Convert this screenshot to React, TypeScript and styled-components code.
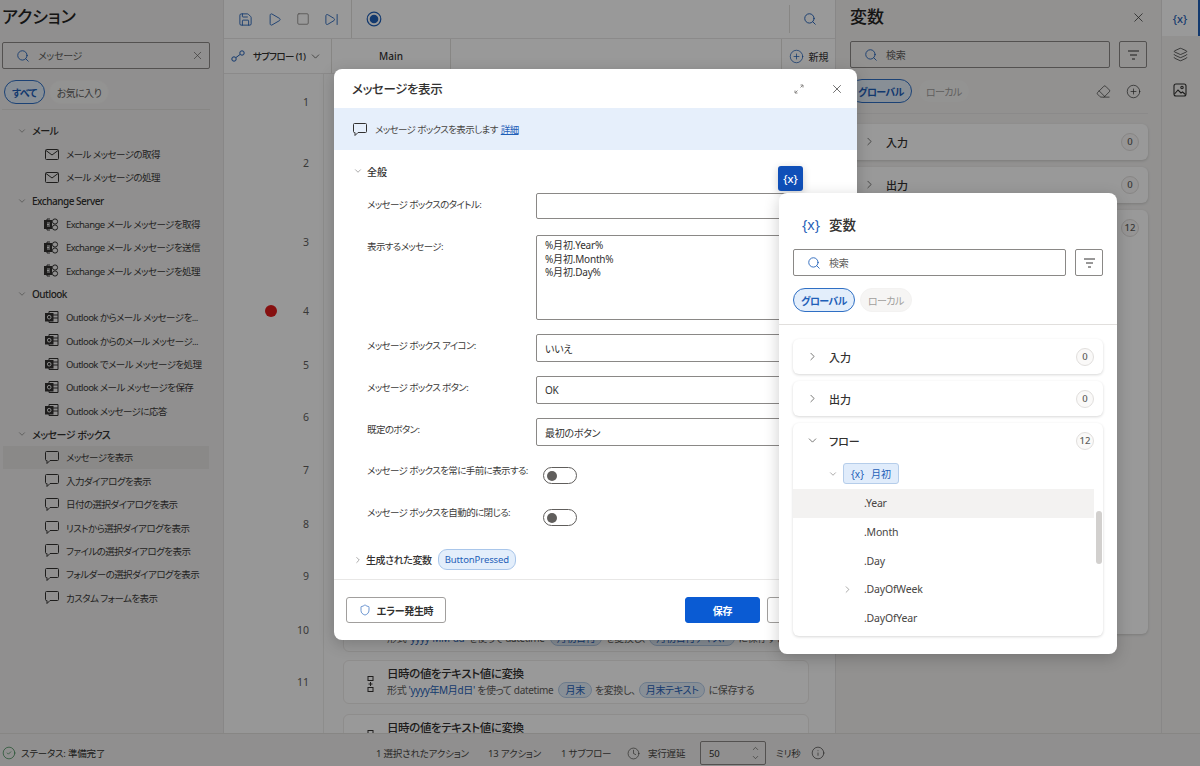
import React from "react";
import styled, { createGlobalStyle } from "styled-components";
import {
  ChevronDown,
  ChevronRight,
  CircleCheck,
  CirclePlus,
  Clock,
  Eraser,
  Info,
  Layers,
  Play,
  Save,
  Search,
  Shield,
  SkipForward,
  Square,
  X,
} from "lucide-react";

const BLUE = "#1f5fb8";

const GlobalStyle = createGlobalStyle`
  * { box-sizing: border-box; }
  html, body { margin: 0; padding: 0; height: 100%; overflow: hidden; }
  body {
    font-family: "Noto Sans", "Noto Sans CJK JP", sans-serif;
    font-feature-settings: "palt";
    font-size: 10px;
    color: #323130;
    background: #fff;
  }
`;

const MailIcon = () => (
  <svg width="14" height="11" viewBox="0 0 14 11" fill="none" stroke="#323130" strokeWidth="1">
    <rect x="0.5" y="0.5" width="13" height="10" rx="1" />
    <path d="M1 1.500 7 6l6-4.500" />
  </svg>
);

const BubbleIcon = () => (
  <svg width="14" height="13" viewBox="0 0 14 13" fill="none" stroke="#323130" strokeWidth="1">
    <path d="M1.500.5h11a1 1 0 0 1 1 1v7a1 1 0 0 1-1 1H5l-3 3v-3H1.500a1 1 0 0 1-1-1v-7a1 1 0 0 1 1-1z" />
  </svg>
);

const ExchangeIcon = () => (
  <svg width="15" height="13" viewBox="0 0 15 13" fill="none" stroke="#323130" strokeWidth="1">
    <rect x="0.5" y="2.500" width="7" height="8" fill="#323130" />
    <path d="M3 2.500V1h3M3 10.500V12h3" />
    <circle cx="11" cy="3.500" r="2.600" />
    <circle cx="11" cy="9.500" r="2.600" />
    <path d="M3 5h3M3 6.500h2.500M3 8h3" stroke="#eee" />
  </svg>
);

const OutlookIcon = () => (
  <svg width="14" height="13" viewBox="0 0 14 13" fill="none" stroke="#323130" strokeWidth="1">
    <path d="M4 2.500V.5h9v11H4V10" />
    <path d="M8 4h5M8 7h5" />
    <rect x="0.5" y="2.500" width="7.500" height="7.500" fill="#323130" />
    <circle cx="4.200" cy="6.200" r="1.800" stroke="#eee" />
  </svg>
);

const FilterIcon = () => (
  <svg width="13" height="10" viewBox="0 0 13 10" fill="none" stroke="#323130" strokeWidth="1">
    <path d="M1 1h11M3 5h7M5 9h3" />
  </svg>
);

const RecordIcon = () => (
  <svg width="16" height="16" viewBox="0 0 16 16">
    <circle cx="8" cy="8" r="6.800" fill="none" stroke={BLUE} strokeWidth="1.200" />
    <circle cx="8" cy="8" r="4.300" fill={BLUE} />
  </svg>
);

const SubflowIcon = () => (
  <svg width="14" height="12" viewBox="0 0 14 12" fill="none" stroke={BLUE} strokeWidth="1">
    <circle cx="3" cy="9" r="2.200" />
    <circle cx="11" cy="3" r="2.200" />
    <path d="M5 7.500 9 4.500" />
  </svg>
);

const ExpandIcon = () => (
  <svg width="10" height="10" viewBox="0 0 10 10" fill="none" stroke="#8a8886" strokeWidth="1">
    <path d="M1 9 3.500 6.500M6.500 3.500 9 1M6.500 1H9v2.500M1 6.500V9h2.500" />
  </svg>
);

const ImageRailIcon = () => (
  <svg width="14" height="14" viewBox="0 0 14 14" fill="none" stroke="#323130" strokeWidth="1.100">
    <rect x="1" y="1" width="12" height="12" rx="2" />
    <circle cx="9" cy="4.500" r="1.200" />
    <path d="M1.500 11 5 7l3 3 1.500-1 3 2.500" />
  </svg>
);

const ConvertIcon = () => (
  <svg width="7" height="16" viewBox="0 0 7 16" fill="none" stroke="#323130" strokeWidth="1">
    <rect x="1" y="0.500" width="5" height="4" />
    <rect x="1" y="11.500" width="5" height="4" />
    <path d="M1.500 8h4M3.500 6v4" />
  </svg>
);

const Page = styled.div`
  width: 1200px;
  height: 766px;
  position: relative;
  overflow: hidden;
  display: flex;
  flex-direction: column;
`;

const Workspace = styled.div`
  flex: 1;
  min-height: 0;
  display: flex;
`;

const ActionsPanel = styled.aside`
  width: 224px;
  flex-shrink: 0;
  background: #f0efee;
  padding: 5px 0 0 2px;
  border-right: 1px solid #e3e2e1;
`;

const PanelTitle = styled.h2`
  margin: 0;
  font-size: 17px;
  line-height: 24px;
  font-weight: 500;
  color: #242322;
`;

const LeftSearch = styled.div`
  margin-top: 13px;
`;

const SearchBox = styled.div<{ $width: number; $white?: boolean }>`
  width: ${(p) => p.$width}px;
  height: 27px;
  border: 1px solid #8a8886;
  border-radius: 2px;
  background: ${(p) => (p.$white ? "#fff" : "transparent")};
  display: flex;
  align-items: center;
  padding: 0 5px 0 13px;
  gap: 8px;
  font-size: 10px;
  letter-spacing: -0.3px;
  color: #605e5c;
  flex-shrink: 0;
`;

const SearchText = styled.span`
  flex: 1;
`;

const ChipRow = styled.div<{ $gap?: number }>`
  display: flex;
  align-items: center;
  gap: ${(p) => p.$gap ?? 4}px;
`;

const Pill = styled.span<{ $active?: boolean; $faint?: boolean }>`
  height: 24px;
  padding: 0 7px;
  border-radius: 12px;
  display: inline-flex;
  align-items: center;
  font-size: 10px;
  letter-spacing: -0.6px;
  font-weight: ${(p) => (p.$active ? 600 : 400)};
  border: 1px solid ${(p) => (p.$active ? "#2f6fc4" : "#f3f2f1")};
  background: ${(p) => (p.$active ? "#e3eefb" : "#f6f5f4")};
  color: ${(p) => (p.$active ? BLUE : p.$faint ? "#a19f9d" : "#605e5c")};
`;

const LeftChips = styled(ChipRow)`
  padding: 11px 0 5px 2px;
  border-bottom: 1px solid #e1dfdd;
  width: 208px;
`;

const Tree = styled.div`
  padding-top: 9px;
`;

const TreeHeader = styled.div`
  height: 23.350px;
  display: flex;
  align-items: center;
  gap: 5px;
  padding-left: 15px;
  font-weight: 500;
  font-size: 10px;
  letter-spacing: -0.5px;
`;

const TreeItem = styled.div<{ $active?: boolean }>`
  height: 23.350px;
  width: 206px;
  margin-left: 1px;
  display: flex;
  align-items: center;
  padding-left: 41px;
  gap: 7px;
  font-size: 9.500px;
  letter-spacing: -0.55px;
  white-space: nowrap;
  color: #3b3a39;
  background: ${(p) => (p.$active ? "#e6e5e3" : "transparent")};
`;

const ItemIcon = styled.span`
  width: 15px;
  display: inline-flex;
  justify-content: center;
`;

const FlowPanel = styled.main`
  width: 611px;
  flex-shrink: 0;
  background: #fcfcfc;
  display: flex;
  flex-direction: column;
  overflow: hidden;
`;

const Toolbar = styled.div`
  height: 39px;
  flex-shrink: 0;
  background: #fff;
  border-bottom: 1px solid #e8e7e6;
  display: flex;
  align-items: center;
  padding-left: 14px;
  gap: 14px;
  color: ${BLUE};
`;

const ToolDivider = styled.span`
  width: 1px;
  height: 38px;
  background: #e1dfdd;
  margin-left: -2px;
`;

const ToolSearch = styled.div`
  margin-left: auto;
  margin-right: 6px;
  width: 40px;
  height: 28px;
  border-left: 1px solid #e1dfdd;
  display: flex;
  align-items: center;
  justify-content: center;
`;

const TabBar = styled.div`
  height: 35px;
  flex-shrink: 0;
  background: #fff;
  border-bottom: 1px solid #e8e7e6;
  display: flex;
  align-items: stretch;
`;

const SubflowTab = styled.div`
  width: 108px;
  border-right: 1px solid #e1dfdd;
  display: flex;
  align-items: center;
  padding-left: 7px;
  font-size: 9.500px;
  letter-spacing: -0.6px;
  font-weight: 500;
  white-space: nowrap;
`;

const SubflowLabel = styled.span`
  margin: 0 4px 0 8px;
`;

const MainTab = styled.div`
  width: 119px;
  border-right: 1px solid #e1dfdd;
  display: flex;
  align-items: center;
  justify-content: center;
  font-weight: 500;
`;

const NewButton = styled.div`
  margin-left: auto;
  width: 54px;
  border-left: 1px solid #e1dfdd;
  display: flex;
  align-items: center;
  justify-content: center;
  gap: 5px;
  color: ${BLUE};
`;

const NewLabel = styled.span`
  color: #323130;
`;

const Rows = styled.div`
  flex: 1;
  min-height: 0;
  overflow: hidden;
`;

const Row = styled.div<{ $height: number }>`
  height: ${(p) => p.$height}px;
  display: flex;
  align-items: center;
`;

const Gutter = styled.div`
  width: 100px;
  height: 100%;
  flex-shrink: 0;
  position: relative;
  border-right: 1px solid #ecebea;
  display: flex;
  align-items: center;
  justify-content: flex-end;
  padding-right: 14px;
  font-size: 10.500px;
  color: #605e5c;
`;

const Breakpoint = styled.span`
  position: absolute;
  left: 41px;
  top: 50%;
  width: 12px;
  height: 12px;
  margin-top: -6px;
  border-radius: 50%;
  background: #e01b1b;
`;

const FlowCard = styled.div`
  flex: 1;
  height: 44px;
  flex-shrink: 0;
  margin: 0 26px 0 19px;
  background: #fff;
  border: 1px solid #edebe9;
  border-radius: 6px;
  display: flex;
  align-items: flex-start;
  padding: 5px 0 0 23px;
  gap: 13px;
  overflow: hidden;
`;

const CardIcon = styled.span`
  margin-top: 10px;
  display: inline-flex;
`;

const CardTitle = styled.div`
  font-size: 11.500px;
  letter-spacing: -0.4px;
  line-height: 16px;
  font-weight: 500;
`;

const CardText = styled.div`
  font-size: 10px;
  letter-spacing: -0.35px;
  line-height: 15px;
  color: #605e5c;
  white-space: nowrap;
`;

const Format = styled.span`
  color: ${BLUE};
`;

const VarChip = styled.span`
  display: inline-block;
  padding: 0 6px;
  margin: 0 3px;
  line-height: 14px;
  border-radius: 8px;
  background: #e3eefb;
  border: 1px solid #b5cdea;
  color: ${BLUE};
`;

const VariablesPanel = styled.aside`
  width: 326px;
  flex-shrink: 0;
  background: #f3f2f1;
  border-left: 1px solid #e3e2e1;
  padding: 5px 13px 0 14px;
`;

const PanelHead = styled.div`
  height: 24px;
  display: flex;
  align-items: center;
  justify-content: space-between;
  padding-right: 2px;
  margin-bottom: 12px;
`;

const SearchRow = styled.div`
  display: flex;
  align-items: center;
  gap: 9px;
`;

const FilterButton = styled.span<{ $white?: boolean }>`
  width: 28px;
  height: 27px;
  border: 1px solid #8a8886;
  border-radius: 2px;
  display: inline-flex;
  align-items: center;
  justify-content: center;
  background: ${(p) => (p.$white ? "#fff" : "transparent")};
`;

const ScopeRow = styled.div`
  display: flex;
  align-items: center;
  gap: 6px;
  padding: 11px 0 10px 0;
  margin-bottom: 10px;
  border-bottom: 1px solid #e8e7e6;
`;

const ScopeActions = styled.div`
  margin-left: auto;
  display: flex;
  align-items: center;
  gap: 15px;
  padding-right: 7px;
`;

const GroupCard = styled.div<{ $height: number }>`
  height: ${(p) => p.$height}px;
  background: #fff;
  border-radius: 6px;
  box-shadow: 0 1px 3px rgba(0, 0, 0, 0.16);
  margin-bottom: 7px;
`;

const GroupHead = styled.div`
  height: 35px;
  display: flex;
  align-items: center;
  gap: 10px;
  padding: 0 9px 0 13px;
  font-size: 11px;
  font-weight: 500;
`;

const GroupLabel = styled.span`
  flex: 1;
`;

const Count = styled.span`
  width: 18px;
  height: 18px;
  border-radius: 50%;
  border: 1px solid #e1dfdd;
  background: #faf9f8;
  display: inline-flex;
  align-items: center;
  justify-content: center;
  font-size: 9.500px;
  color: #605e5c;
`;

const Rail = styled.nav`
  flex: 1;
  background: #f3f2f1;
  border-left: 1px solid #e3e2e1;
  display: flex;
  flex-direction: column;
  align-items: stretch;
`;

const RailButton = styled.div<{ $active?: boolean }>`
  height: 36px;
  display: flex;
  align-items: center;
  justify-content: center;
  background: ${(p) => (p.$active ? "#fff" : "transparent")};
  border-right: 2px solid ${(p) => (p.$active ? BLUE : "transparent")};
  color: ${BLUE};
  font-size: 11px;
  font-weight: 500;
`;

const StatusBar = styled.footer`
  height: 33px;
  flex-shrink: 0;
  background: #f0efee;
  border-top: 1px solid #e1dfdd;
  display: flex;
  align-items: center;
  padding: 6px 0 0 2px;
  font-size: 9.500px;
  letter-spacing: -0.2px;
`;

const StatusLeft = styled.div`
  width: 374px;
  display: flex;
  align-items: center;
  gap: 5px;
  color: #323130;
`;

const StatusItem = styled.span<{ $width: number }>`
  width: ${(p) => p.$width}px;
  color: #484644;
  white-space: nowrap;
`;

const DelayLabel = styled(StatusItem)`
  margin-left: 8px;
`;

const DelayBox = styled.span`
  width: 66px;
  height: 24px;
  margin: 0 10px 0 8px;
  border: 1px solid #8a8886;
  border-radius: 2px;
  display: inline-flex;
  align-items: center;
  justify-content: space-between;
  padding: 0 5px 0 8px;
`;

const Stepper = styled.span`
  display: inline-flex;
  flex-direction: column;
  line-height: 0;
`;

const StepUp = styled(ChevronDown)`
  transform: rotate(180deg);
`;

const Dim = styled.div`
  position: absolute;
  inset: 0;
  background: rgba(0, 0, 0, 0.4);
`;

const Modal = styled.section`
  position: absolute;
  left: 334px;
  top: 69px;
  width: 523px;
  height: 571px;
  background: #fff;
  border-radius: 8px;
  overflow: hidden;
  box-shadow: 0 4px 16px rgba(0, 0, 0, 0.2);
  display: flex;
  flex-direction: column;
`;

const ModalHead = styled.div`
  height: 39px;
  flex-shrink: 0;
  display: flex;
  align-items: center;
  padding: 0 13px 0 18px;
  font-size: 12.500px;
  letter-spacing: -0.4px;
  font-weight: 500;
`;

const ModalTitle = styled.span`
  flex: 1;
`;

const ExpandWrap = styled.span`
  display: inline-flex;
  margin-right: 26px;
`;

const InfoBand = styled.div`
  height: 42px;
  flex-shrink: 0;
  background: #e6effb;
  display: flex;
  align-items: center;
  gap: 8px;
  padding-left: 19px;
  font-size: 9.500px;
  letter-spacing: -0.6px;
  color: #484644;
`;

const DocLink = styled.a`
  color: ${BLUE};
  text-decoration: underline;
  margin-left: 3px;
`;

const SectionHead = styled.div`
  display: flex;
  align-items: center;
  gap: 4px;
  padding-left: 19px;
  height: 42px;
  margin-bottom: 1px;
  font-weight: 500;
`;

const FormGrid = styled.div`
  display: grid;
  grid-template-columns: 169px 320px;
  padding-left: 33px;
  row-gap: 14px;
  margin-bottom: 18px;
`;

const FieldLabel = styled.label`
  font-size: 9.500px;
  letter-spacing: -0.6px;
  line-height: 14px;
  padding-top: 5px;
  white-space: nowrap;
  color: #3b3a39;
`;

const FieldBox = styled.div<{ $height: number }>`
  height: ${(p) => p.$height}px;
  border: 1px solid #8a8886;
  border-radius: 2px;
  padding: 0 8px;
  font-size: 10px;
  letter-spacing: -0.3px;
  display: flex;
  align-items: center;
`;

const TitleBox = styled(FieldBox)`
  margin-bottom: 2px;
`;

const MessageBox = styled.div`
  height: 85px;
  border: 1px solid #8a8886;
  border-radius: 2px;
  padding: 3px 8px;
  font-size: 10px;
  letter-spacing: -0.2px;
  line-height: 13.500px;
`;

const ToggleRow = styled.div`
  display: grid;
  grid-template-columns: 176px auto;
  justify-content: start;
  align-items: start;
  padding-left: 33px;
  height: 42px;
`;

const ToggleLabel = styled.span`
  font-size: 9.500px;
  letter-spacing: -0.6px;
  line-height: 14px;
  color: #3b3a39;
  white-space: nowrap;
`;

const Toggle = styled.span`
  margin-top: 3px;
  width: 34px;
  height: 17px;
  border: 1px solid #605e5c;
  border-radius: 9px;
  display: inline-flex;
  align-items: center;
  padding-left: 3px;
`;

const Knob = styled.span`
  width: 10px;
  height: 10px;
  border-radius: 50%;
  background: #605e5c;
`;

const GeneratedRow = styled.div`
  display: flex;
  align-items: center;
  gap: 3px;
  padding-left: 19px;
  height: 21px;
  margin-top: 1px;
  font-weight: 500;
  font-size: 10px;
  letter-spacing: -0.4px;
`;

const OutputChip = styled.span`
  height: 21px;
  margin-left: 3px;
  padding: 0 6px;
  border-radius: 9px;
  display: inline-flex;
  align-items: center;
  background: #e3eefb;
  border: 1px solid #a9c6ea;
  color: ${BLUE};
  font-size: 9.500px;
  letter-spacing: -0.1px;
  font-weight: 400;
`;

const ModalFoot = styled.div`
  margin-top: 9px;
  height: 61px;
  border-top: 1px solid #e8e7e6;
  display: flex;
  align-items: center;
  padding: 0 7px 0 12px;
  gap: 7px;
`;

const FootButton = styled.button<{ $width: number; $primary?: boolean }>`
  width: ${(p) => p.$width}px;
  height: 26px;
  flex-shrink: 0;
  border-radius: 3px;
  border: 1px solid ${(p) => (p.$primary ? "#0a5bd3" : "#a19f9d")};
  background: ${(p) => (p.$primary ? "#0a5bd3" : "#fff")};
  color: ${(p) => (p.$primary ? "#fff" : "#323130")};
  font: inherit;
  font-weight: 600;
  letter-spacing: -0.3px;
  display: inline-flex;
  align-items: center;
  justify-content: center;
  gap: 6px;
  padding: 0;
`;

const FootGap = styled.span`
  flex: 1;
`;

const VarTrigger = styled.span`
  position: absolute;
  left: 778px;
  top: 166px;
  width: 25px;
  height: 25px;
  border-radius: 3px;
  background: #0f4fb8;
  color: #fff;
  font-size: 11px;
  font-weight: 500;
  display: flex;
  align-items: center;
  justify-content: center;
  box-shadow: 0 2px 8px rgba(0, 0, 0, 0.2);
`;

const Popup = styled.section`
  position: absolute;
  left: 779px;
  top: 193px;
  width: 338px;
  height: 461px;
  background: #fff;
  border-radius: 8px;
  box-shadow: 0 4px 16px rgba(0, 0, 0, 0.2);
  padding-top: 19px;
`;

const PopupHead = styled.div`
  height: 24px;
  display: flex;
  align-items: center;
  gap: 9px;
  padding-left: 23px;
  font-size: 13.500px;
  font-weight: 500;
  margin-bottom: 13px;
`;

const VarGlyph = styled.span`
  color: ${BLUE};
  font-size: 14px;
  font-weight: 400;
`;

const PopupSearch = styled(SearchRow)`
  padding-left: 14px;
`;

const PopupScopes = styled(ChipRow)`
  padding: 12px 0 12px 14px;
  border-bottom: 1px solid #e1dfdd;
  margin-bottom: 14px;
  gap: 5px;
`;

const PopupGroups = styled.div`
  padding: 0 14px;
`;

const VarRow = styled.div`
  display: flex;
  align-items: center;
  height: 31px;
  padding-left: 35px;
  gap: 5px;
`;

const VarChipBox = styled.span`
  height: 21px;
  width: 56px;
  border-radius: 3px;
  background: #e0ecfb;
  border: 1px solid #b5cdea;
  color: ${BLUE};
  display: inline-flex;
  align-items: center;
  justify-content: center;
  gap: 7px;
`;

const TreeScroll = styled.div`
  position: relative;
`;

const FieldRow = styled.div<{ $active?: boolean }>`
  height: 28.700px;
  width: 301px;
  display: flex;
  align-items: center;
  padding-left: 71px;
  position: relative;
  font-size: 10.500px;
  letter-spacing: -0.2px;
  color: #484644;
  background: ${(p) => (p.$active ? "#f3f2f1" : "transparent")};
`;

const FieldChevron = styled.span`
  position: absolute;
  left: 49px;
  display: inline-flex;
`;

const ScrollThumb = styled.span`
  position: absolute;
  right: 1px;
  top: 53px;
  width: 6px;
  height: 53px;
  border-radius: 3px;
  background: #d2d0ce;
`;

const TREE: { head: string; icon: React.ReactNode; items: string[] }[] = [
  { head: "メール", icon: <MailIcon />, items: ["メール メッセージの取得", "メール メッセージの処理"] },
  {
    head: "Exchange Server",
    icon: <ExchangeIcon />,
    items: ["Exchange メール メッセージを取得", "Exchange メール メッセージを送信", "Exchange メール メッセージを処理"],
  },
  {
    head: "Outlook",
    icon: <OutlookIcon />,
    items: [
      "Outlook からメール メッセージを...",
      "Outlook からのメール メッセージ...",
      "Outlook でメール メッセージを処理",
      "Outlook メール メッセージを保存",
      "Outlook メッセージに応答",
    ],
  },
  {
    head: "メッセージ ボックス",
    icon: <BubbleIcon />,
    items: [
      "メッセージを表示",
      "入力ダイアログを表示",
      "日付の選択ダイアログを表示",
      "リストから選択ダイアログを表示",
      "ファイルの選択ダイアログを表示",
      "フォルダーの選択ダイアログを表示",
      "カスタム フォームを表示",
    ],
  },
];

const ROW_HEIGHTS = [56, 66, 92, 46, 62, 42, 64, 44, 60, 48, 56, 52];

// only the cards that peek out under the dialog carry text
const CONVERT_ROWS: Record<number, React.ReactNode> = {
  10: (
    <CardText>
      形式 <Format>'yyyy-MM-dd'</Format> を使って datetime <VarChip>月初日付</VarChip>を変換し、
      <VarChip>月初日付テキスト</VarChip>に保存する
    </CardText>
  ),
  11: (
    <CardText>
      形式 <Format>'yyyy年M月d日'</Format> を使って datetime <VarChip>月末</VarChip>を変換し、
      <VarChip>月末テキスト</VarChip>に保存する
    </CardText>
  ),
  12: <CardText />,
};

const FIELD_ROWS = [".Year", ".Month", ".Day", ".DayOfWeek", ".DayOfYear"];

const App = () => {
  return (
    <>
      <GlobalStyle />
      <Page>
        <Workspace>
          <ActionsPanel>
            <PanelTitle>アクション</PanelTitle>
            <LeftSearch>
              <SearchBox $width={208}>
                <Search size={14} color={BLUE} strokeWidth={1.5} />
                <SearchText>メッセージ</SearchText>
                <X size={13} strokeWidth={1.25} />
              </SearchBox>
            </LeftSearch>
            <LeftChips>
              <Pill $active>すべて</Pill>
              <Pill>お気に入り</Pill>
            </LeftChips>
            <Tree>
              {TREE.map((group) => (
                <div key={group.head}>
                  <TreeHeader>
                    <ChevronDown size={10} strokeWidth={1} />
                    {group.head}
                  </TreeHeader>
                  {group.items.map((item) => (
                    <TreeItem key={item} $active={item === "メッセージを表示"}>
                      <ItemIcon>{group.icon}</ItemIcon>
                      {item}
                    </TreeItem>
                  ))}
                </div>
              ))}
            </Tree>
          </ActionsPanel>

          <FlowPanel>
            <Toolbar>
              <Save size={15} strokeWidth={1.4} />
              <Play size={15} strokeWidth={1.4} />
              <Square size={14} strokeWidth={1.4} color="#8a8886" />
              <SkipForward size={15} strokeWidth={1.4} />
              <ToolDivider />
              <RecordIcon />
              <ToolSearch>
                <Search size={14} strokeWidth={1.6} />
              </ToolSearch>
            </Toolbar>
            <TabBar>
              <SubflowTab>
                <SubflowIcon />
                <SubflowLabel>サブフロー (1)</SubflowLabel>
                <ChevronDown size={13} strokeWidth={1.2} />
              </SubflowTab>
              <MainTab>Main</MainTab>
              <NewButton>
                <CirclePlus size={15} strokeWidth={1.2} />
                <NewLabel>新規</NewLabel>
              </NewButton>
            </TabBar>
            <Rows>
              {ROW_HEIGHTS.map((height, i) => {
                const line = i + 1;
                return (
                  <Row key={line} $height={height}>
                    <Gutter>
                      {line === 4 && <Breakpoint />}
                      {line <= 11 ? line : ""}
                    </Gutter>
                    <FlowCard>
                      {CONVERT_ROWS[line] && (
                        <>
                          <CardIcon>
                            <ConvertIcon />
                          </CardIcon>
                          <div>
                            <CardTitle>日時の値をテキスト値に変換</CardTitle>
                            {CONVERT_ROWS[line]}
                          </div>
                        </>
                      )}
                    </FlowCard>
                  </Row>
                );
              })}
            </Rows>
          </FlowPanel>

          <VariablesPanel>
            <PanelHead>
              <PanelTitle>変数</PanelTitle>
              <X size={15} strokeWidth={1.2} />
            </PanelHead>
            <SearchRow>
              <SearchBox $width={260}>
                <Search size={14} color={BLUE} strokeWidth={1.5} />
                <SearchText>検索</SearchText>
              </SearchBox>
              <FilterButton>
                <FilterIcon />
              </FilterButton>
            </SearchRow>
            <ScopeRow>
              <Pill $active>グローバル</Pill>
              <Pill $faint>ローカル</Pill>
              <ScopeActions>
                <Eraser size={15} strokeWidth={1.1} />
                <CirclePlus size={15} strokeWidth={1.1} />
              </ScopeActions>
            </ScopeRow>
            <GroupCard $height={36}>
              <GroupHead>
                <ChevronRight size={13} strokeWidth={1.2} />
                <GroupLabel>入力</GroupLabel>
                <Count>0</Count>
              </GroupHead>
            </GroupCard>
            <GroupCard $height={36}>
              <GroupHead>
                <ChevronRight size={13} strokeWidth={1.2} />
                <GroupLabel>出力</GroupLabel>
                <Count>0</Count>
              </GroupHead>
            </GroupCard>
            <GroupCard $height={424}>
              <GroupHead>
                <ChevronDown size={13} strokeWidth={1.2} />
                <GroupLabel />
                <Count>12</Count>
              </GroupHead>
            </GroupCard>
          </VariablesPanel>

          <Rail>
            <RailButton $active>{"{x}"}</RailButton>
            <RailButton>
              <Layers size={15} strokeWidth={1.2} color="#323130" />
            </RailButton>
            <RailButton>
              <ImageRailIcon />
            </RailButton>
          </Rail>
        </Workspace>

        <StatusBar>
          <StatusLeft>
            <CircleCheck size={14} strokeWidth={1.1} color="#1f7a3a" />
            ステータス: 準備完了
          </StatusLeft>
          <StatusItem $width={112}>1 選択されたアクション</StatusItem>
          <StatusItem $width={73}>13 アクション</StatusItem>
          <StatusItem $width={66}>1 サブフロー</StatusItem>
          <Clock size={13} strokeWidth={1.1} />
          <DelayLabel $width={44}>実行遅延</DelayLabel>
          <DelayBox>
            50
            <Stepper>
              <StepUp size={9} strokeWidth={1.4} />
              <ChevronDown size={9} strokeWidth={1.4} />
            </Stepper>
          </DelayBox>
          <StatusItem $width={35}>ミリ秒</StatusItem>
          <Info size={14} strokeWidth={1.1} />
        </StatusBar>

        <Dim />

        <Modal>
          <ModalHead>
            <ModalTitle>メッセージを表示</ModalTitle>
            <ExpandWrap>
              <ExpandIcon />
            </ExpandWrap>
            <X size={14} strokeWidth={1.2} />
          </ModalHead>
          <InfoBand>
            <BubbleIcon />
            <span>
              メッセージ ボックスを表示します
              <DocLink>詳細</DocLink>
            </span>
          </InfoBand>
          <SectionHead>
            <ChevronDown size={10} strokeWidth={1} />
            全般
          </SectionHead>
          <FormGrid>
            <FieldLabel>メッセージ ボックスのタイトル:</FieldLabel>
            <TitleBox $height={26} />
            <FieldLabel>表示するメッセージ:</FieldLabel>
            <MessageBox>
              %月初.Year%
              <br />
              %月初.Month%
              <br />
              %月初.Day%
            </MessageBox>
            <FieldLabel>メッセージ ボックス アイコン:</FieldLabel>
            <FieldBox $height={28}>いいえ</FieldBox>
            <FieldLabel>メッセージ ボックス ボタン:</FieldLabel>
            <FieldBox $height={28}>OK</FieldBox>
            <FieldLabel>既定のボタン:</FieldLabel>
            <FieldBox $height={28}>最初のボタン</FieldBox>
          </FormGrid>
          <ToggleRow>
            <ToggleLabel>メッセージ ボックスを常に手前に表示する:</ToggleLabel>
            <Toggle>
              <Knob />
            </Toggle>
          </ToggleRow>
          <ToggleRow>
            <ToggleLabel>メッセージ ボックスを自動的に閉じる:</ToggleLabel>
            <Toggle>
              <Knob />
            </Toggle>
          </ToggleRow>
          <GeneratedRow>
            <ChevronRight size={10} strokeWidth={1} />
            生成された変数
            <OutputChip>ButtonPressed</OutputChip>
          </GeneratedRow>
          <ModalFoot>
            <FootButton $width={100}>
              <Shield size={12} strokeWidth={1.3} color={BLUE} />
              エラー発生時
            </FootButton>
            <FootGap />
            <FootButton $width={75} $primary>
              保存
            </FootButton>
            <FootButton $width={83} />
          </ModalFoot>
        </Modal>

        <VarTrigger>{"{x}"}</VarTrigger>

        <Popup>
          <PopupHead>
            <VarGlyph>{"{x}"}</VarGlyph>
            変数
          </PopupHead>
          <PopupSearch>
            <SearchBox $width={273} $white>
              <Search size={14} color={BLUE} strokeWidth={1.5} />
              <SearchText>検索</SearchText>
            </SearchBox>
            <FilterButton $white>
              <FilterIcon />
            </FilterButton>
          </PopupSearch>
          <PopupScopes>
            <Pill $active>グローバル</Pill>
            <Pill $faint>ローカル</Pill>
          </PopupScopes>
          <PopupGroups>
            <GroupCard $height={35}>
              <GroupHead>
                <ChevronRight size={13} strokeWidth={1.2} />
                <GroupLabel>入力</GroupLabel>
                <Count>0</Count>
              </GroupHead>
            </GroupCard>
            <GroupCard $height={35}>
              <GroupHead>
                <ChevronRight size={13} strokeWidth={1.2} />
                <GroupLabel>出力</GroupLabel>
                <Count>0</Count>
              </GroupHead>
            </GroupCard>
            <GroupCard $height={213}>
              <GroupHead>
                <ChevronDown size={13} strokeWidth={1.2} />
                <GroupLabel>フロー</GroupLabel>
                <Count>12</Count>
              </GroupHead>
              <TreeScroll>
                <VarRow>
                  <ChevronDown size={10} strokeWidth={1} />
                  <VarChipBox>
                    <span>{"{x}"}</span>
                    月初
                  </VarChipBox>
                </VarRow>
                <div>
                  {FIELD_ROWS.map((name) => (
                    <FieldRow key={name} $active={name === ".Year"}>
                      {name === ".DayOfWeek" && (
                        <FieldChevron>
                          <ChevronRight size={11} strokeWidth={1} />
                        </FieldChevron>
                      )}
                      {name}
                    </FieldRow>
                  ))}
                </div>
                <ScrollThumb />
              </TreeScroll>
            </GroupCard>
          </PopupGroups>
        </Popup>
      </Page>
    </>
  );
};

export default App;
